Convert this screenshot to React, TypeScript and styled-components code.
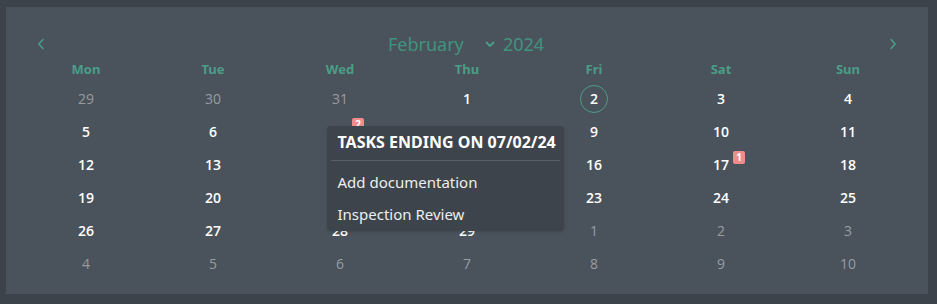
import React from "react";
import styled, { createGlobalStyle } from "styled-components";

const Global = createGlobalStyle`
  html, body { margin: 0; padding: 0; background: #3d434a; }
  body { font-family: "Noto Sans", "Open Sans", sans-serif; }
`;

const TEAL = "#4a9d88";

const Page = styled.div`
  width: 937px;
  height: 304px;
  box-sizing: border-box;
  padding: 7px 9px 10px 6px;
  background: #3d434a;
`;

const Card = styled.div`
  height: 100%;
  box-sizing: border-box;
  background: #4a535b;
  padding: 25px 16px 14px 16px;
  display: flex;
  flex-direction: column;
`;

const Header = styled.div`
  height: 24px;
  display: flex;
  align-items: center;
  justify-content: space-between;
  padding: 0 14px;
`;

const NavButton = styled.button`
  background: none;
  border: none;
  padding: 0;
  width: 10px;
  height: 14px;
  display: flex;
  align-items: center;
  justify-content: center;
  cursor: pointer;
  color: ${TEAL};
`;

const MonthYear = styled.div`
  display: flex;
  align-items: center;
  color: #3f937f;
  font-size: 18px;
  font-family: "Noto Sans", sans-serif;
  margin-left: -2px;
`;

const MonthSelect = styled.div`
  width: 115px;
  display: flex;
  align-items: center;
  justify-content: space-between;
  padding-right: 8px;
  box-sizing: border-box;
`;

const Grid = styled.div`
  position: relative;
  display: grid;
  grid-template-columns: repeat(7, 127px);
  margin-left: 0.5px;
`;

const WeekDay = styled.div`
  height: 26px;
  display: flex;
  align-items: center;
  justify-content: center;
  color: ${TEAL};
  font-size: 13px;
  font-weight: 700;
`;

const Cell = styled.div`
  height: 33px;
  display: flex;
  align-items: center;
  justify-content: center;
`;

const DayNum = styled.span<{ $muted?: boolean; $today?: boolean }>`
  position: relative;
  display: inline-flex;
  align-items: center;
  justify-content: center;
  width: 28px;
  height: 28px;
  box-sizing: border-box;
  border-radius: 50%;
  border: 1px solid ${(p) => (p.$today ? TEAL : "transparent")};
  font-family: "Open Sans", "Noto Sans", sans-serif;
  font-size: 14px;
  font-weight: ${(p) => (p.$muted ? 400 : 600)};
  color: ${(p) => (p.$muted ? "#969ca2" : "#ffffff")};
`;

const Badge = styled.span`
  position: absolute;
  top: -1px;
  left: 25px;
  min-width: 10px;
  height: 13px;
  padding: 0 1px;
  border-radius: 2px;
  background: #f28b8b;
  color: #fff;
  font-size: 10px;
  font-weight: 700;
  line-height: 13px;
  text-align: center;
`;

const Tooltip = styled.div`
  position: absolute;
  left: 304px;
  top: 70px;
  width: 237px;
  height: 105px;
  box-sizing: border-box;
  background: #3e444b;
  border-radius: 4px;
  padding: 4px 4px 0 4px;
  z-index: 2;
  box-shadow: 0 1px 3px rgba(0, 0, 0, 0.15);
`;

const TooltipTitle = styled.div`
  color: #ffffff;
  font-size: 16px;
  font-weight: 700;
  white-space: nowrap;
  padding: 0 0 6px 7px;
  height: 24px;
  line-height: 24px;
  border-bottom: 1px solid #596067;
`;

const TooltipItem = styled.div`
  color: #eceeef;
  font-size: 15px;
  white-space: nowrap;
  padding: 0 7px;
  height: 32px;
  line-height: 32px;
  &:first-of-type {
    margin-top: 5px;
  }
`;

const Items = styled.div``;

const Chevron = ({ dir }: { dir: "left" | "right" }) => (
  <svg width="8" height="12" viewBox="0 0 8 12" fill="none">
    <path
      d={dir === "left" ? "M6 1.5 L1.8 6 L6 10.5" : "M2 1.5 L6.2 6 L2 10.5"}
      stroke="currentColor"
      strokeWidth="1.6"
      strokeLinecap="round"
      strokeLinejoin="round"
    />
  </svg>
);

const Down = () => (
  <svg width="10" height="7" viewBox="0 0 10 7" fill="none">
    <path d="M1.5 1.5 L5 5 L8.5 1.5" stroke={TEAL} strokeWidth="1.8" strokeLinecap="round" strokeLinejoin="round" />
  </svg>
);

type Day = { n: number; muted?: boolean; today?: boolean; badge?: number };

const weekdays = ["Mon", "Tue", "Wed", "Thu", "Fri", "Sat", "Sun"];

const days: Day[] = [
  { n: 29, muted: true },
  { n: 30, muted: true },
  { n: 31, muted: true },
  ...Array.from({ length: 29 }, (_, i) => ({ n: i + 1 } as Day)),
  ...Array.from({ length: 10 }, (_, i) => ({ n: i + 1, muted: true } as Day)),
];
days[4].today = true;
days[9].badge = 2;
days[19].badge = 1;

export default function App() {
  return (
    <>
      <Global />
      <Page>
        <Card>
          <Header>
            <NavButton aria-label="Previous month">
              <Chevron dir="left" />
            </NavButton>
            <MonthYear>
              <MonthSelect>
                <span>February</span>
                <Down />
              </MonthSelect>
              <span>2024</span>
            </MonthYear>
            <NavButton aria-label="Next month">
              <Chevron dir="right" />
            </NavButton>
          </Header>
          <Grid>
            {weekdays.map((w) => (
              <WeekDay key={w}>{w}</WeekDay>
            ))}
            {days.map((d, i) => (
              <Cell key={i}>
                <DayNum $muted={d.muted} $today={d.today}>
                  {d.n}
                  {d.badge ? <Badge>{d.badge}</Badge> : null}
                </DayNum>
              </Cell>
            ))}
            <Tooltip>
              <TooltipTitle>TASKS ENDING ON 07/02/24</TooltipTitle>
              <Items>
                <TooltipItem>Add documentation</TooltipItem>
                <TooltipItem>Inspection Review</TooltipItem>
              </Items>
            </Tooltip>
          </Grid>
        </Card>
      </Page>
    </>
  );
}
